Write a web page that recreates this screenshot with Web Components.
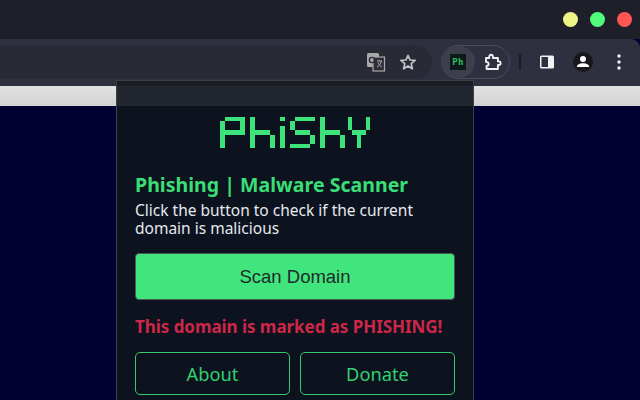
<!doctype html>
<html><head><meta charset="utf-8"><style>
html,body{margin:0;padding:0;width:640px;height:400px;overflow:hidden;background:#000033}
</style></head><body>
<browser-window>
  <browser-toolbar slot="toolbar"></browser-toolbar>
  <phishy-popup slot="popup">
    <pixel-logo slot="logo"></pixel-logo>
    <span slot="title">Phishing | Malware Scanner</span>
    <span slot="desc">Click the button to check if the current domain is malicious</span>
    <span slot="scan">Scan Domain</span>
    <span slot="alert">This domain is marked as PHISHING!</span>
    <outline-button slot="actions">About</outline-button>
    <outline-button slot="actions">Donate</outline-button>
  </phishy-popup>
</browser-window>
<script>
class BrowserWindow extends HTMLElement{constructor(){super();this.attachShadow({mode:'open'}).innerHTML=`<style>
:host{display:flex;flex-direction:column;width:640px;height:400px;position:relative;overflow:hidden;background:#000033}
.title{height:39px;background:#1f1f2a;display:flex;justify-content:flex-end;align-items:center;gap:12px;padding:0 8px 0 0;box-sizing:border-box}
.dot{width:15px;height:15px;border-radius:50%;display:block}
.strip{height:20px;background:linear-gradient(#e2e2e2,#d2d2d2)}
::slotted([slot=popup]){position:absolute;left:116px;top:80px}
</style>
<div class="title"><i class="dot" style="background:#eff584"></i><i class="dot" style="background:#50fa7b"></i><i class="dot" style="background:#ff5555"></i></div>
<slot name="toolbar"></slot><div class="strip"></div><slot name="popup"></slot>`}}
class BrowserToolbar extends HTMLElement{constructor(){super();this.attachShadow({mode:'open'}).innerHTML=`<style>
:host{display:flex;align-items:center;height:47px;background:#2f303f;border-radius:0 9px 0 0;position:relative;box-sizing:border-box;padding-bottom:1px}
.omni{width:432px;height:34px;background:#282a36;border-radius:0 17px 17px 0;display:flex;align-items:center;justify-content:flex-end;padding-right:15px;gap:13px;box-sizing:border-box}
.pill{margin-left:9px;width:69px;height:34px;box-sizing:border-box;border:1px solid #4a4c59;border-radius:17px;display:flex;align-items:center;position:relative}
.ext{width:34px;height:32px;border-radius:16px;background:#3d3f4c;display:flex;align-items:center;justify-content:center;margin-left:-1px;}
.ph{width:16px;height:16px;background:#0c1a1a;color:#2cc066;font:bold 9px/16px "DejaVu Sans Mono",monospace;text-align:center;letter-spacing:.3px;display:block}
.puz{margin-left:9px;display:block}
.div{width:2px;height:16px;background:#1c1d27;margin:0 18px 0 9px}
svg{display:block}
.side{margin-right:17px}
.dots{margin-left:23px}
</style>
<div class="omni">
<svg width="20" height="20" viewBox="0 0 20 20"><rect x="1" y="1" width="12" height="14" rx="1.5" fill="#a9a9a9"/><rect x="7" y="5" width="11.500" height="14" fill="#2d2e39" stroke="#a9a9a9" stroke-width="1.200"/><circle cx="6" cy="8" r="2.600" fill="none" stroke="#2a2b35" stroke-width="1.400"/><path d="M11 9h5M13.500 8v1M15.500 9c-.6 3-2.600 5-4.500 6M12 10.500c.8 2 2.200 3.500 4 4.500" fill="none" stroke="#a9a9a9" stroke-width="1"/></svg>
<svg width="18" height="18" viewBox="0 0 18 18"><path d="M9 2.300l2 4.700 5.100.4-3.900 3.300 1.200 5L9 13l-4.400 2.700 1.200-5L1.900 7.400 7 7z" fill="none" stroke="#c4c4c8" stroke-width="1.700" stroke-linejoin="round"/></svg>
</div>
<div class="pill"><div class="ext"><span class="ph">Ph</span></div>
<svg class="puz" width="18" height="18" viewBox="0 0 18 18"><path d="M2 5h3.300V3.500a1.800 1.800 0 0 1 3.600 0V5h5v3.400h.9a1.800 1.800 0 0 1 0 3.600h-.9v4H2.600v-3c1.300 0 2-.9 2-2s-.9-2.100-2.600-2.100z" fill="none" stroke="#f2f2f2" stroke-width="1.900" stroke-linejoin="round"/></svg>
</div>
<div class="div"></div>
<svg class="side" width="16" height="16" viewBox="0 0 16 16"><rect x="1" y="1.500" width="14" height="13" rx="1.500" fill="#f2f2f2"/><rect x="2.500" y="3" width="6.500" height="10" fill="#2f303f"/></svg>
<svg width="22" height="22" viewBox="0 0 22 22"><circle cx="11" cy="11" r="10" fill="#17171c"/><circle cx="11" cy="8" r="3" fill="#fff"/><path d="M4.800 16c0-2.600 3-3.800 6.200-3.800s6.200 1.200 6.200 3.800z" fill="#fff"/></svg>
<svg class="dots" width="4" height="16" viewBox="0 0 4 16"><circle cx="2" cy="2" r="1.700" fill="#f2f2f2"/><circle cx="2" cy="8" r="1.700" fill="#f2f2f2"/><circle cx="2" cy="14" r="1.700" fill="#f2f2f2"/></svg>`}}
class PixelLogo extends HTMLElement{constructor(){super();
 const glyphs=[[0,["01111","10001","10001","11111","10000","10000","10000"]],
 [6,["10000","10000","10000","11110","10001","10001","10001"]],
 [12,["1","0","1","1","1","1","1"]],
 [14,["01111","10000","10000","01110","00001","00001","11110"]],
 [20,["10000","10000","10000","11110","10001","10001","10001"]],
 [25.6,["10001","10001","10001","01110","00100","00100","00100"]]];
 const ry=[0,4,9,13,18,22,27,31];
 let r='';for(const [x,rows] of glyphs){rows.forEach((row,y)=>{[...row].forEach((c,i)=>{if(c==='1'){const X=x>25?Math.round(128+i*4.4):(x+i)*5;const X2=x>25?Math.round(128+(i+1)*4.4):(x+i+1)*5;r+=`<rect x="${X}" y="${ry[y]}" width="${X2-X}" height="${ry[y+1]-ry[y]}"/>`}})})}
 this.attachShadow({mode:'open'}).innerHTML=`<style>:host{display:block;width:150px;height:31px}svg{display:block;filter:blur(.3px)}</style><svg role="img" aria-label="PhiShY" width="150" height="31" viewBox="0 0 150 31" fill="#3ce27a" shape-rendering="crispEdges">${r}</svg>`}}
class PhishyPopup extends HTMLElement{constructor(){super();this.attachShadow({mode:'open'}).innerHTML=`<style>
:host{display:block;width:358px;height:340px;box-sizing:border-box;border:1px solid #3c3f44;border-bottom:0;background:#0d131e}
.head{height:25px;background:linear-gradient(#191c23 0,#191c23 5px,#22262e 5px,#22262e 25px)}
.body{display:flex;flex-direction:column;padding:0 18px;}
.logo{display:flex;justify-content:center;margin-top:11px;height:31px}
h1{margin:24px 0 0;font:700 19.500px/26px "Noto Sans",sans-serif;color:#3ade76;white-space:nowrap;letter-spacing:.03px}
p{margin:3px 0 0;font:400 15.500px/18px "Noto Sans",sans-serif;color:#e4e9ee;width:300px}
.scan{margin-top:16px;height:47px;box-sizing:border-box;border:1px solid #4a5a55;border-radius:4px;background:#40e67d;color:#1e2b2b;font:400 18.500px/45px "Liberation Sans",sans-serif;text-align:center;width:320px}
.alert{margin-top:15px;font:700 17px/24px "Noto Sans",sans-serif;color:#cc2748;white-space:nowrap;letter-spacing:-.05px}
.actions{display:grid;grid-template-columns:155px 155px;gap:10px;margin-top:13px}
</style><div class="head"></div><div class="body">
<div class="logo"><slot name="logo"></slot></div>
<h1><slot name="title"></slot></h1>
<p><slot name="desc"></slot></p>
<div class="scan"><slot name="scan"></slot></div>
<div class="alert"><slot name="alert"></slot></div>
<div class="actions"><slot name="actions"></slot></div>
</div>`}}
class OutlineButton extends HTMLElement{constructor(){super();this.attachShadow({mode:'open'}).innerHTML=`<style>
:host{display:flex;align-items:center;justify-content:center;height:43px;box-sizing:border-box;border:1.500px solid #37c86e;border-radius:5px;color:#33cf70;font:400 18.300px "Noto Sans",sans-serif}
</style><slot></slot>`}}
customElements.define('pixel-logo',PixelLogo);
customElements.define('outline-button',OutlineButton);
customElements.define('phishy-popup',PhishyPopup);
customElements.define('browser-toolbar',BrowserToolbar);
customElements.define('browser-window',BrowserWindow);
</script></body></html>
